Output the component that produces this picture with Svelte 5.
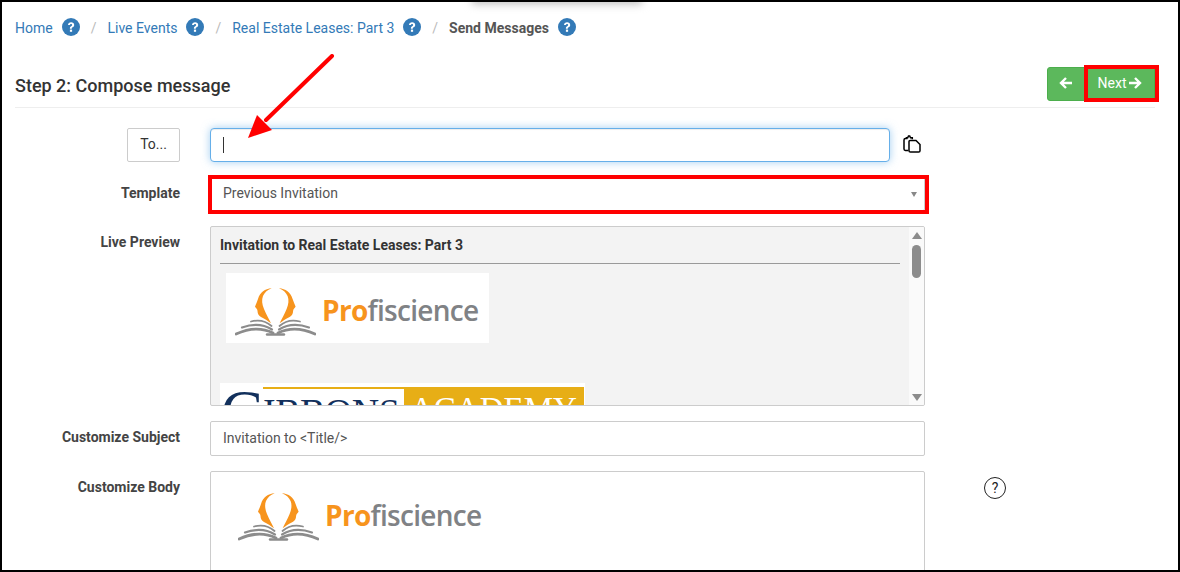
<script>
    const crumbs = [
        { label: "Home", current: false },
        { label: "Live Events", current: false },
        { label: "Real Estate Leases: Part 3", current: false },
        { label: "Send Messages", current: true }
    ];
</script>

{#snippet helpIcon()}
    <svg class="help" viewBox="0 0 18 18" aria-hidden="true">
        <circle cx="9" cy="9" r="9" fill="#337ab7" />
        <path d="M6 7.100c.1-1.800 1.400-2.800 3.100-2.800 1.800 0 3.100 1.100 3.100 2.600 0 1.200-.7 1.900-1.600 2.400-.6.4-.8.6-.8 1.100v.3H7.900v-.5c0-1 .4-1.500 1.200-2 .6-.4 1-.7 1-1.200 0-.6-.5-1-1.100-1-.7 0-1.100.4-1.200 1.100z" fill="#fff" />
        <rect x="7.900" y="11.600" width="2.200" height="2.200" fill="#fff" />
    </svg>
{/snippet}

{#snippet profiscience()}
    <svg class="mark" viewBox="0 0 81 50" aria-hidden="true">
        <g fill="#f7941d">
            <path d="M36.700 1.300C30 2 25 5 23 12c-1 3-2 5-3 7.700 1 1.300 2.500 2.300 2.500 4.300 0 3 1.500 5 3.500 6 4 2 7 4 10 6.300-2-4.300-5-9.300-7-14.300-2-5-2.500-9-1-13 1.500-3 4-6 8.700-7.700z" />
            <path transform="translate(80.600 0) scale(-1 1)" d="M36.700 1.300C30 2 25 5 23 12c-1 3-2 5-3 7.700 1 1.300 2.500 2.300 2.500 4.300 0 3 1.500 5 3.500 6 4 2 7 4 10 6.300-2-4.300-5-9.300-7-14.300-2-5-2.500-9-1-13 1.500-3 4-6 8.700-7.700z" />
        </g>
        <g fill="none" stroke="#8c8c8c" stroke-linecap="round">
            <path d="M1 47c11-5 25-7 37-1" stroke-width="2.800" />
            <path d="M7 40.500c10-3.500 21-3.500 30 2" stroke-width="2.200" />
            <path d="M16 34.500c8-2 15-.5 20.500 4.500" stroke-width="1.800" />
            <path d="M80 47c-11-5-25-7-37-1" stroke-width="2.800" />
            <path d="M74 40.500c-10-3.500-21-3.500-30 2" stroke-width="2.200" />
            <path d="M65 34.500c-8-2-15-.5-20.500 4.500" stroke-width="1.800" />
            <path d="M32 47.500h17" stroke-width="2.400" />
        </g>
    </svg>
    <span class="wordmark"><b>Pro</b>fiscience</span>
{/snippet}

<div class="frame">
    <div class="smudge"></div>

    <nav class="crumbs">
        {#each crumbs as crumb, i}
            {#if i > 0}<span class="slash">/</span>{/if}
            <span class:current={crumb.current} class="crumb">{crumb.label}</span>
            {@render helpIcon()}
        {/each}
    </nav>

    <header class="step">
        <h1>Step 2: Compose message</h1>
        <div class="btns">
            <button class="btn back" aria-label="Back">
                <svg viewBox="0 0 14 14"><path d="M13 7H2M7 2 2 7l5 5" /></svg>
            </button>
            <button class="btn next">
                Next
                <svg viewBox="0 0 14 14"><path d="M1 7h11M7 2l5 5-5 5" /></svg>
            </button>
        </div>
    </header>

    <form class="form" onsubmit={(e) => e.preventDefault()}>
        <div class="label"><button type="button" class="to">To...</button></div>
        <div class="to-row">
            <div class="input focused"><i class="caret"></i></div>
            <svg class="copy" viewBox="0 0 18 18" aria-hidden="true">
                <path d="M4.500 3.500H2.500C1.500 3.500 1 4 1 5v9c0 .9.500 1.400 1.400 1.400h3" />
                <path d="M3.500 3.500V2.800h1.200L5.500 1h1.200l.8 1.800h1.800v1.400" />
                <path d="M7 5.500h6l4 4v6.200c0 .9-.5 1.300-1.300 1.300H7.400c-.9 0-1.400-.5-1.400-1.300V6.500c0-.6.400-1 1-1z" />
            </svg>
        </div>
        <div></div>

        <div class="label text template">Template</div>
        <div class="input select">
            Previous Invitation
            <i class="tri"></i>
        </div>
        <div></div>

        <div class="label text">Live Preview</div>
        <div class="preview">
            <div class="pane">
                <div class="mail-title">Invitation to Real Estate Leases: Part 3</div>
                <div class="rule"></div>
                <div class="logo small">{@render profiscience()}</div>
                <div class="gibbons">
                    <span class="g">G</span>
                    <div class="g-right">
                        <div class="g-line"></div>
                        <div class="g-row">
                            <span class="ibbons">IBBONS</span>
                            <span class="academy">ACADEMY</span>
                        </div>
                    </div>
                </div>
            </div>
            <div class="bar">
                <i class="up"></i>
                <i class="thumb"></i>
                <i class="down"></i>
            </div>
        </div>
        <div></div>

        <div class="label text">Customize Subject</div>
        <div class="input">Invitation to &lt;Title/&gt;</div>
        <div></div>

        <div class="label text">Customize Body</div>
        <div class="body-box">
            <div class="logo">{@render profiscience()}</div>
        </div>
        <div class="tip"><span class="tip-icon">?</span></div>
    </form>

    <svg class="arrow" viewBox="0 0 100 100" aria-hidden="true">
        <line x1="86" y1="2" x2="20" y2="66" stroke="#f00" stroke-width="4" stroke-linecap="round" />
        <polygon points="2,84 11,61 26,76" fill="#f00" />
    </svg>
</div>

<style>
:global(body) {
    background: #fff;
}

.frame {
    position: relative;
    box-sizing: border-box;
    width: 1180px;
    height: 572px;
    border: 2px solid #000;
    padding: 0 23px 0 13px;
    overflow: hidden;
    background: #fff;
    font-family: Roboto, "Liberation Sans", sans-serif;
    font-size: 14px;
    color: #555;
}

.smudge {
    position: absolute;
    top: -8px;
    left: 470px;
    width: 170px;
    height: 10px;
    background: #bbb;
    filter: blur(4px);
}

.crumbs {
    display: flex;
    align-items: center;
    height: 52px;
}

.crumb {
    color: #337ab7;
}

.crumb.current {
    color: #555;
    font-weight: 700;
}

.help {
    width: 18px;
    height: 18px;
    margin: -3px 0 0 9px;
}

.slash {
    color: #bbb;
    margin: 0 11px 0 11px;
}

.step {
    display: flex;
    justify-content: space-between;
    align-items: flex-start;
    height: 53px;
    margin-bottom: 20px;
    border-bottom: 1px solid #eee;
}

h1 {
    margin: 22px 0 0;
    font-size: 18px;
    font-weight: 500;
    color: #333;
    line-height: 20px;
}

.btns {
    display: flex;
    margin-top: 13px;
}

.btn {
    position: relative;
    display: flex;
    align-items: center;
    justify-content: center;
    height: 34px;
    border: 1px solid #4cae4c;
    background: #5cb85c;
    color: #fff;
    font: 14px Roboto, "Liberation Sans", sans-serif;
    padding: 0 0 2px;
}

.btn svg {
    width: 14px;
    height: 14px;
    fill: none;
    stroke: #fff;
    stroke-width: 2.400;
}

.back {
    width: 38px;
    border-radius: 3px 0 0 3px;
}

.next {
    width: 70px;
    gap: 2px;
}

.next::after {
    content: "";
    position: absolute;
    inset: -3px -5px -2px -2px;
    border: 4px solid #f00;
}

.form {
    display: grid;
    grid-template-columns: 165px 715px 1fr;
    grid-template-rows: 33px;
    column-gap: 30px;
    row-gap: 15px;
}

.label {
    display: flex;
    justify-content: flex-end;
    align-items: flex-start;
}

.label.text {
    padding-top: 8px;
    font-weight: 700;
    color: #444;
}

.label.template {
    padding-top: 9px;
}

.to {
    flex: none;
    width: 53px;
    height: 34px;
    padding: 0 0 2px;
    background: #fff;
    border: 1px solid #ccc;
    border-radius: 2px;
    color: #333;
    font: 14px Roboto, "Liberation Sans", sans-serif;
}

.to-row {
    display: flex;
    align-items: flex-start;
    gap: 13px;
}

.input {
    position: relative;
    box-sizing: border-box;
    display: flex;
    align-items: center;
    flex: 1;
    min-height: 35px;
    padding: 0 12px 2px;
    border: 1px solid #ccc;
    border-radius: 2px;
    background: #fff;
    color: #555;
}

.focused {
    height: 34px;
    min-height: 34px;
    max-width: 680px;
    flex: 0 0 680px;
    padding-bottom: 0;
    border-color: #66afe9;
    border-radius: 4px;
    box-shadow: inset 0 1px 1px rgba(0, 0, 0, .075), 0 0 8px rgba(102, 175, 233, .6);
}

.caret {
    width: 1px;
    height: 16px;
    background: #333;
}

.copy {
    width: 18px;
    height: 18px;
    margin-top: 7px;
    fill: none;
    stroke: #000;
    stroke-width: 1.500;
}

.select::after {
    content: "";
    position: absolute;
    inset: -2px -5px -4px -3px;
    border: 4px solid #f00;
}

.tri {
    position: absolute;
    right: 7px;
    top: 15px;
    border: 3px solid transparent;
    border-top: 5px solid #888;
    border-bottom: 0;
}

.preview {
    display: flex;
    height: 180px;
    box-sizing: border-box;
    border: 1px solid #ccc;
    border-radius: 2px;
    background: #f3f3f3;
    overflow: hidden;
}

.pane {
    flex: 1;
    padding: 0 9px;
    overflow: hidden;
}

.mail-title {
    font-weight: 700;
    color: #333;
    line-height: 20px;
    padding-top: 8px;
}

.rule {
    height: 1px;
    background: #999;
    margin-top: 8px;
}

.logo {
    display: flex;
    align-items: center;
    width: 263px;
    height: 70px;
    box-sizing: border-box;
    padding: 8px 0 0 9px;
    background: #fff;
}

.logo.small {
    margin: 9px 0 0 6px;
}

.mark {
    width: 81px;
    height: 50px;
    flex: none;
}

.wordmark {
    margin-left: 6px;
    margin-top: -4px;
    font: 600 28px "Open Sans", sans-serif;
    letter-spacing: -.7px;
    color: #808285;
}

.wordmark b {
    color: #f7941d;
    font-weight: 700;
}

.gibbons {
    display: flex;
    width: 365px;
    height: 22px;
    overflow: hidden;
    margin-top: 40px;
    background: #fff;
    font-family: "Liberation Serif", serif;
}

.g {
    width: 43px;
    flex: none;
    font-size: 62px;
    line-height: 56px;
    padding-left: 1px;
    box-sizing: border-box;
    color: #12305c;
}

.g-right {
    flex: 1;
    padding-top: 4px;
}

.g-line {
    height: 2px;
    width: 141px;
    background: #e7ae16;
}

.g-row {
    display: flex;
}

.ibbons {
    width: 141px;
    padding-top: 4px;
    font-size: 38px;
    line-height: 38px;
    letter-spacing: -.5px;
    color: #12305c;
}

.academy {
    width: 180px;
    margin-top: -2px;
    padding: 3px 0 0 6px;
    box-sizing: border-box;
    height: 60px;
    background: #e7ae16;
    color: #fff;
    font-size: 33px;
    line-height: 38px;
    white-space: nowrap;
    overflow: hidden;
}

.bar {
    position: relative;
    display: flex;
    flex-direction: column;
    align-items: center;
    width: 15px;
    background: #fafafa;
}

.up,
.down {
    position: absolute;
    border: 5px solid transparent;
}

.up {
    top: 5px;
    border-top: 0;
    border-bottom: 7px solid #8c8c8c;
}

.down {
    bottom: 4px;
    border-bottom: 0;
    border-top: 7px solid #8c8c8c;
}

.thumb {
    margin-top: 18px;
    width: 9px;
    height: 33px;
    border-radius: 5px;
    background: #8c8c8c;
}

.body-box {
    height: 200px;
    box-sizing: border-box;
    border: 1px solid #ccc;
    border-radius: 2px;
    padding: 6px 0 0 18px;
    background: #fff;
}

.tip {
    padding: 6px 0 0 29px;
}

.tip-icon {
    display: flex;
    align-items: center;
    justify-content: center;
    box-sizing: border-box;
    width: 22px;
    height: 22px;
    border: 1.500px solid #222;
    border-radius: 50%;
    font-size: 14px;
    color: #222;
}

/* red annotation drawn over the page */
.arrow {
    position: absolute;
    left: 244px;
    top: 52px;
    width: 100px;
    height: 100px;
}
</style>
